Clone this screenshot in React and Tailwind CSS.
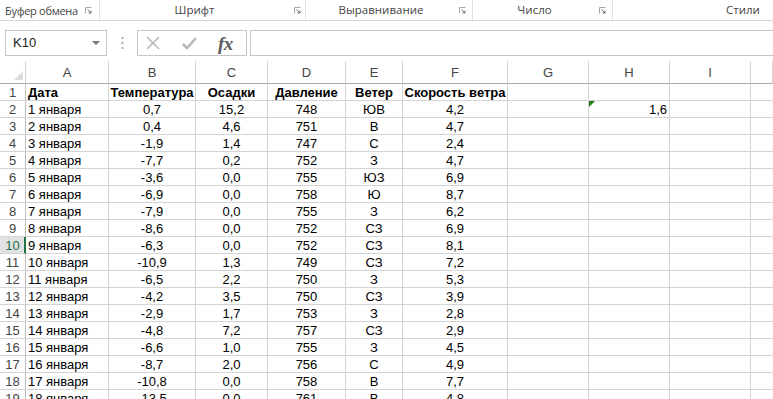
import React from 'react';

const rows = [
  ['1 января', '0,7', '15,2', '748', 'ЮВ', '4,2'],
  ['2 января', '0,4', '4,6', '751', 'В', '4,7'],
  ['3 января', '-1,9', '1,4', '747', 'С', '2,4'],
  ['4 января', '-7,7', '0,2', '752', 'З', '4,7'],
  ['5 января', '-3,6', '0,0', '755', 'ЮЗ', '6,9'],
  ['6 января', '-6,9', '0,0', '758', 'Ю', '8,7'],
  ['7 января', '-7,9', '0,0', '755', 'З', '6,2'],
  ['8 января', '-8,6', '0,0', '752', 'СЗ', '6,9'],
  ['9 января', '-6,3', '0,0', '752', 'СЗ', '8,1'],
  ['10 января', '-10,9', '1,3', '749', 'СЗ', '7,2'],
  ['11 января', '-6,5', '2,2', '750', 'З', '5,3'],
  ['12 января', '-4,2', '3,5', '750', 'СЗ', '3,9'],
  ['13 января', '-2,9', '1,7', '753', 'З', '2,8'],
  ['14 января', '-4,8', '7,2', '757', 'СЗ', '2,9'],
  ['15 января', '-6,6', '1,0', '755', 'З', '4,5'],
  ['16 января', '-8,7', '2,0', '756', 'С', '4,9'],
  ['17 января', '-10,8', '0,0', '758', 'В', '7,7'],
  ['18 января', '-13,5', '0,0', '761', 'В', '4,8'],
];

const header = ['Дата', 'Температура', 'Осадки', 'Давление', 'Ветер', 'Скорость ветра'];
const cols = ['A', 'B', 'C', 'D', 'E', 'F', 'G', 'H', 'I', ''];

const Launcher = () => (
  <svg width="7" height="7" viewBox="0 0 7 7" className="shrink-0">
    <path d="M0.5 6.5V0.5H6.5" stroke="#a6a6a6" fill="none" />
    <path d="M2.5 2.5L6 6M6 3.5V6H3.5" stroke="#6f6f6f" fill="none" />
  </svg>
);

const Ribbon = () => (
  <div className="flex h-[21px] border-b border-[#d5d5d5] text-[11.5px] text-[#444] font-['Open_Sans',sans-serif] leading-none whitespace-nowrap">
    <div className="w-[100px] shrink-0 flex items-center border-r border-[#e1e1e1] pl-[5px] pr-[7px]">
      <span className="flex-1 text-[11px] tracking-[-0.3px]">Буфер обмена</span>
      <Launcher />
    </div>
    <div className="w-[206px] shrink-0 flex items-center border-r border-[#e1e1e1]">
      <span className="flex-1 text-center">Шрифт</span>
      <div className="w-[16px] flex justify-end pr-[4px]"><Launcher /></div>
    </div>
    <div className="w-[167px] shrink-0 flex items-center border-r border-[#e1e1e1]">
      <span className="flex-1 text-center">Выравнивание</span>
      <div className="w-[16px] flex justify-end pr-[6px]"><Launcher /></div>
    </div>
    <div className="w-[140px] shrink-0 flex items-center border-r border-[#e1e1e1]">
      <span className="flex-1 text-center">Число</span>
      <div className="w-[16px] flex justify-end pr-[6px]"><Launcher /></div>
    </div>
    <div className="flex-1 flex items-center pl-[113px]">
      <span>Стили</span>
    </div>
  </div>
);

const FormulaBar = () => (
  <div className="flex h-[40px] pt-[9px] items-start">
    <div className="ml-[5px] w-[102px] h-[26px] shrink-0 border border-[#c6c6c6] flex items-center justify-between pl-[7px] pr-[6px] font-['Liberation_Sans',sans-serif] text-[13px] text-[#222]">
      <span>K10</span>
      <svg width="8" height="4" viewBox="0 0 8 4"><path d="M0 0H8L4 4Z" fill="#777" /></svg>
    </div>
    <div className="w-[30px] h-[26px] shrink-0 flex items-center justify-center">
      <svg width="3" height="12" viewBox="0 0 3 12">
        <rect x="0.5" y="0" width="2" height="2" fill="#b0b0b0" />
        <rect x="0.5" y="5" width="2" height="2" fill="#b0b0b0" />
        <rect x="0.5" y="10" width="2" height="2" fill="#b0b0b0" />
      </svg>
    </div>
    <div className="w-[110px] h-[26px] shrink-0 border border-[#c6c6c6] flex items-center">
      <svg width="14" height="14" viewBox="0 0 14 14" className="ml-[8px]">
        <path d="M1 1L13 13M13 1L1 13" stroke="#b8b8b8" strokeWidth="1.6" />
      </svg>
      <svg width="15" height="13" viewBox="0 0 15 13" className="ml-[22px]">
        <path d="M1 7L5 11L14 1" stroke="#b8b8b8" strokeWidth="2.6" fill="none" />
      </svg>
      <span className="ml-[21px] font-['Liberation_Serif',serif] italic font-bold text-[19px] leading-none text-[#5a5a5a] tracking-[-0.5px]">fx</span>
    </div>
    <div className="ml-[3px] flex-1 h-[26px] border border-r-0 border-[#c6c6c6]" />
  </div>
);

const grid = 'grid grid-cols-[26px_83px_87px_72px_78px_57px_105px_81px_81px_81px_1fr]';

const Sheet = () => (
  <div className="font-['Liberation_Sans',Arial,sans-serif] text-[13px] leading-none text-black">
    <div className={grid}>
      <div className="h-[23px] border-r border-b border-[#ababab] border-r-[#d4d4d4] flex items-end justify-end pr-[2px] pb-[3px]">
        <svg width="9" height="9" viewBox="0 0 9 9"><path d="M9 0V9H0Z" fill="#dcdcdc" /></svg>
      </div>
      {cols.map((c, i) => (
        <div key={i} className="h-[23px] border-r border-b border-[#d4d4d4] border-b-[#ababab] flex items-center justify-center text-[#444]">
          {c}
        </div>
      ))}
    </div>
    {[header, ...rows].map((r, ri) => {
      const n = ri + 1;
      const sel = n === 10;
      return (
        <div key={ri} className={grid}>
          <div
            className={
              sel
                ? 'h-[17px] border-b border-[#d4d4d4] border-r-2 border-r-[#217346] bg-[#e1e1e1] text-[#217346] flex items-center justify-center pl-[1px]'
                : 'h-[17px] border-b border-r border-[#d4d4d4] border-r-[#c0c0c0] text-[#444] flex items-center justify-center'
            }
          >
            {n}
          </div>
          {r.map((v, ci) => (
            <div
              key={ci}
              className={
                (ci === 0 ? 'justify-start pl-[2px] ' : 'justify-center ') +
                (n === 1 ? 'font-bold ' : '') +
                'h-[17px] border-r border-b border-[#d4d4d4] flex items-center whitespace-nowrap'
              }
            >
              {v}
            </div>
          ))}
          <div className="h-[17px] border-r border-b border-[#d4d4d4]" />
          <div className="h-[17px] border-r border-b border-[#d4d4d4] flex items-center justify-end pr-[2px]">
            {n === 2 ? (
              <>
                <svg width="6" height="6" viewBox="0 0 6 6" className="self-start mr-auto">
                  <path d="M0 0H6L0 6Z" fill="#1e7a1e" />
                </svg>
                <span>1,6</span>
              </>
            ) : null}
          </div>
          <div className="h-[17px] border-r border-b border-[#d4d4d4]" />
          <div className="h-[17px] border-b border-[#d4d4d4]" />
        </div>
      );
    })}
  </div>
);

export default function App() {
  return (
    <div className="w-[773px] h-[399px] overflow-hidden bg-white">
      <Ribbon />
      <FormulaBar />
      <Sheet />
    </div>
  );
}
